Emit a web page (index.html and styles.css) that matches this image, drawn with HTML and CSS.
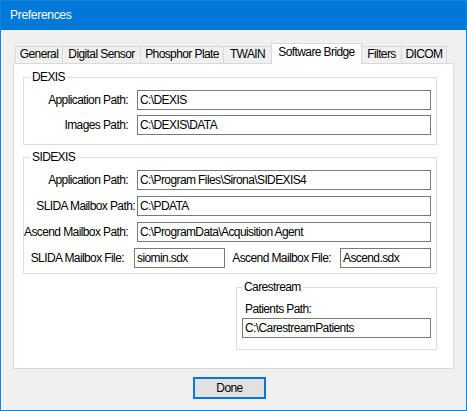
FILE: index.html
```html
<!DOCTYPE html>
<html>
<head>
<meta charset="utf-8">
<link rel="stylesheet" href="styles.css">
</head>
<body>
<div class="window">
  <div class="titlebar">Preferences</div>
  <div class="content">
    <div class="tabs">
      <div class="tab t1">General</div>
      <div class="tab t2">Digital Sensor</div>
      <div class="tab t3">Phosphor Plate</div>
      <div class="tab t4">TWAIN</div>
      <div class="tab t5 active">Software Bridge</div>
      <div class="tab t6">Filters</div>
      <div class="tab t7">DICOM</div>
    </div>
    <div class="panel">
      <div class="group g-dexis">
        <div class="legend">DEXIS</div>
        <div class="form dexis-form">
          <div class="lbl">Application Path:</div><div class="field">C:\DEXIS</div>
          <div class="lbl">Images Path:</div><div class="field">C:\DEXIS\DATA</div>
        </div>
      </div>
      <div class="group g-sidexis">
        <div class="legend">SIDEXIS</div>
        <div class="form sidexis-form">
          <div class="lbl">Application Path:</div><div class="field">C:\Program Files\Sirona\SIDEXIS4</div>
          <div class="lbl lbl-slida">SLIDA Mailbox Path:</div><div class="field">C:\PDATA</div>
          <div class="lbl">Ascend Mailbox Path:</div><div class="field">C:\ProgramData\Acquisition Agent</div>
          <div class="files">
            <div class="lbl lbl-f1">SLIDA Mailbox File:</div><div class="field small">siomin.sdx</div>
            <div class="lbl lbl-f2">Ascend Mailbox File:</div><div class="field small">Ascend.sdx</div>
          </div>
        </div>
      </div>
      <div class="group g-care">
        <div class="legend care-legend">Carestream</div>
        <div class="care-body">
          <div class="care-lbl">Patients Path:</div>
          <div class="field">C:\CarestreamPatients</div>
        </div>
      </div>
    </div>
    <div class="button">Done</div>
  </div>
</div>
</body>
</html>
```
FILE: styles.css
```css
html, body {
  margin: 0;
  padding: 0;
  background: #f0f0f0;
}
body {
  font-family: "Liberation Sans", Arial, sans-serif;
  font-size: 12px;
  letter-spacing: -0.6px;
  color: #000;
}
.window {
  width: 467px;
  height: 411px;
  box-sizing: border-box;
  border: 1px solid #1883d7;
  background: #f0f0f0;
}
.titlebar {
  height: 29px;
  line-height: 28px;
  background: #0078d7;
  color: #fff;
  padding-left: 9px;
  letter-spacing: -0.3px;
}
.content {
  padding-top: 13px;
  height: 367px;
}
.tabs {
  display: flex;
  align-items: flex-end;
  height: 20px;
  margin-left: 14px;
}
.tab {
  box-sizing: border-box;
  height: 17px;
  border: 1px solid #d9d9d9;
  border-bottom: none;
  background: #f0f0f0;
  text-align: center;
  line-height: 15px;
  margin-left: -1px;
}
.t1 { width: 48px; margin-left: 0; }
.t2 { width: 79px; }
.t3 { width: 84px; }
.t4 { width: 49px; }
.t5 { width: 91px; }
.t6 { width: 41px; }
.t7 { width: 46px; }
.tab.active {
  height: 21px;
  margin-bottom: -1px;
  background: #fff;
  line-height: 17px;
  z-index: 1;
}
.panel {
  box-sizing: border-box;
  margin-left: 12px;
  width: 441px;
  height: 306px;
  background: #fff;
  border: 1px solid #d9d9d9;
  padding: 13px 0 0 9px;
}
.group {
  position: relative;
  box-sizing: border-box;
  border: 1px solid #dcdcdc;
  width: 414px;
}
.legend {
  position: absolute;
  top: -8px;
  left: 6px;
  padding: 0 2px;
  line-height: 14px;
  background: #fff;
}
.form {
  display: grid;
  grid-template-columns: 104px 294px;
  column-gap: 9px;
}
.dexis-form {
  padding: 12px 0 9px 0;
  row-gap: 5px;
}
.g-sidexis { margin-top: 12px; }
.sidexis-form {
  padding: 12px 0 5px 0;
  row-gap: 6px;
}
.lbl {
  text-align: right;
  line-height: 20px;
  white-space: nowrap;
}
.lbl-slida { margin-right: -7px; }
.field {
  box-sizing: border-box;
  height: 20px;
  border: 1px solid #7a7a7a;
  line-height: 18px;
  padding: 0 2px;
  white-space: nowrap;
  overflow: hidden;
  background: #fff;
}
.files {
  grid-column: 1 / -1;
  display: flex;
}
.lbl-f1 { width: 100px; margin-right: 10px; }
.lbl-f2 { width: 106px; margin-right: 9px; }
.field.small { width: 91px; }
.group.g-care {
  width: 201px;
  margin-top: 13px;
  margin-left: 213px;
}
.care-legend { left: 5px; }
.care-body {
  padding: 13px 5px 11px 5px;
}
.care-lbl {
  line-height: 16px;
  margin-bottom: 1px;
  padding-left: 3px;
}
.button {
  box-sizing: border-box;
  margin: 8px 0 0 192px;
  width: 73px;
  height: 22px;
  border: 2px solid #0078d7;
  background: #e1e1e1;
  text-align: center;
  line-height: 18px;
}
```
